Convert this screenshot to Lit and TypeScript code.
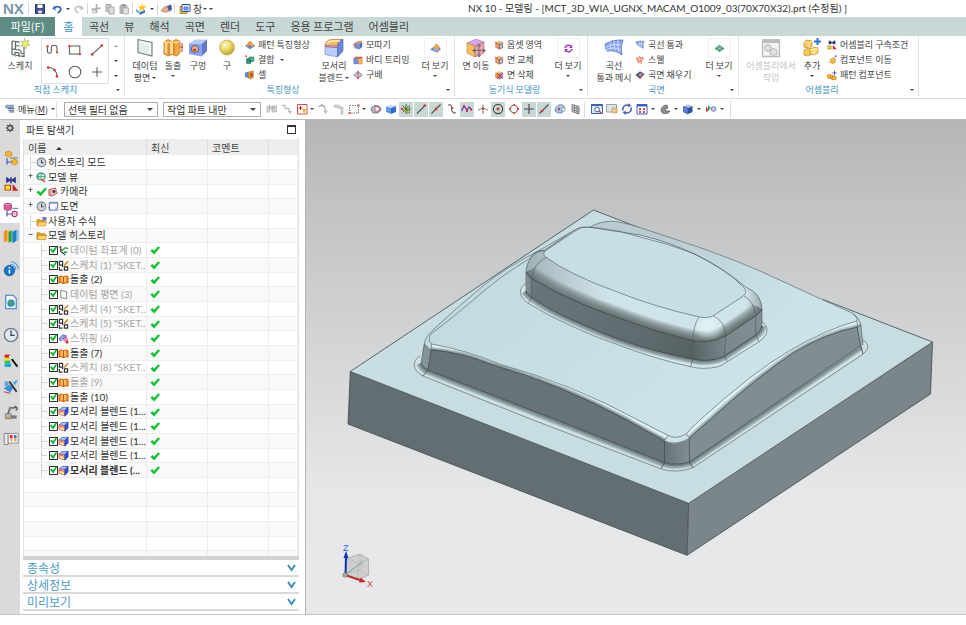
import { LitElement, html, css, svg, nothing, TemplateResult, SVGTemplateResult } from "lit";
import { customElement } from "lit/decorators.js";
import { classMap } from "lit/directives/class-map.js";

/* ---------- icon artwork: 12-unit grid for small glyphs, 20-unit grid for large ones ---------- */

const pad = (x: number, y: number, fill = "#f7b733", edge = "#a8650c") => svg`
  <path d="M${x} ${y + 1.5}l2.5-1.3 2.5 1v2.8l-2.5 1.3-2.5-1z" fill=${fill} stroke=${edge} stroke-width=".6"/>`;

const small: Record<string, SVGTemplateResult> = {
  save: svg`<path d="M1.5 1.5h9v9h-9z" fill="#3f4f8f" stroke="#27356e"/><path d="M3.5 1.5h5v3.5h-5z" fill="#fff"/><path d="M4 7.5h4v3H4z" fill="#cfd6ea"/>`,
  undo: svg`<path d="M4 2.5L1.2 5.4 4.6 7.6z" fill="#3566c8"/><path d="M3 5.2C6 2.5 10.5 3.5 9.6 7c-.4 1.5-1.6 2.4-3 3" fill="none" stroke="#3566c8" stroke-width="1.8"/>`,
  redo: svg`<path d="M8 2.5l2.8 2.9-3.4 2.2z" fill="#b9bfc8"/><path d="M9 5.2C6 2.5 1.5 3.5 2.4 7c.4 1.5 1.6 2.4 3 3" fill="none" stroke="#b9bfc8" stroke-width="1.6"/>`,
  cut: svg`<path d="M6.500 1v9M1.500 6.500l9-1.500" stroke="#a9a9a9" stroke-width="1.500"/><circle cx="4" cy="8.500" r="1.600" fill="none" stroke="#b5b5b5"/>`,
  copy: svg`<path d="M2 1.500h5v7H2z" fill="#c9c9c9" stroke="#a8a8a8"/><path d="M5 4h5v7H5z" fill="#dcdcdc" stroke="#a8a8a8"/>`,
  paste: svg`<rect x="1.500" y="2" width="8" height="9" rx="1" fill="#b4b4b4"/><path d="M5 5h5.500v6H5z" fill="#e0e0e0" stroke="#a0a0a0" stroke-width=".7"/><path d="M3.500 1h4v2h-4z" fill="#989898"/>`,
  star: svg`<path d="M7 0l1 3 4 .3-3 2 1 3.500-3-2-3 2L5 5.300 2.500 3.500l3.500-.3z" fill="#ffc825"/><path d="M1 5.500l4 3.500v2.500L1 9z" fill="#7fb2ec"/><path d="M5 9l5-2v2.500l-5 2.500z" fill="#3b78c8"/>`,
  hand: svg`<path d="M1 7.500l4-4 3 .5 3-1.500v5L7 9H4z" fill="#e7b085" stroke="#a2603c" stroke-width=".6"/><path d="M7 3l4-1.500 1 5-3 1.500z" fill="#3e5ca8"/>`,
  windows: svg`<path d="M1 3.500h7v7H1z" fill="#f5c13c" stroke="#8d6d18" stroke-width=".7"/><path d="M3 1.500h8v7H3z" fill="#e8f0ff" stroke="#2d52b5"/><path d="M5 4h4v3H5z" fill="#7aa6f5" stroke="#2d52b5" stroke-width=".6"/>`,
  pattern: svg`<path d="M0 7l3-2 4 2 4-2 1 2-6 4z" fill="#4e86e0"/><path d="M3 4l3-2.500L9 4 6 6z" fill="#f19a3e" stroke="#b0641a" stroke-width=".5"/><path d="M1 7l2.500-1.500L6 7 3.500 8.500zM6.500 7L9 5.500 11.500 7 9 8.500z" fill="#f3a24c" stroke="#b0641a" stroke-width=".5"/>`,
  unite: svg`<circle cx="1.500" cy="1.500" r="1.100" fill="#e23c2e"/><path d="M2 4.500h5V10H2z" fill="#2f9d77" stroke="#0d5c41" stroke-width=".8"/><path d="M5 2.500h5.500v5H5z" fill="#53b795" stroke="#0d5c41" stroke-width=".8"/><path d="M5.500 4.800h2v2.500h-2z" fill="#1e7d5d"/>`,
  shell: svg`<path d="M0 3l5-1v8L0 8.500z" fill="#5f86d6"/><path d="M4 2.500l6-1.500v8l-3 2-3-1.500z" fill="#f29a44" stroke="#b3641c" stroke-width=".6"/><path d="M6.500 3.500L9 3v4.500L6.500 9z" fill="#a44f16"/>`,
  chamfer: svg`<path d="M2 4l4-2.500h5L8 4z" fill="#f5a04a" stroke="#b5651d" stroke-width=".5"/><path d="M2 4l6 .5V11L2 9.500z" fill="#7da0ee" stroke="#3c55a8" stroke-width=".5"/><path d="M8 4.500l3-2.500v6L8 11z" fill="#4d6bc6"/><path d="M0 5l7 4" stroke="#d4352b" stroke-width="1.100"/>`,
  trim: svg`<path d="M1 4h6v6.500H1z" fill="#6f93e8" stroke="#3c55a8" stroke-width=".6"/><path d="M6 4h5v6.500H6z" fill="#f6b36c" stroke="#c26b1d" stroke-width=".6"/><path d="M1 4l2-2h8.500l-.5 2z" fill="#dd5b3d"/>`,
  draft: svg`<path d="M6 1.500L11 6 6 10.500 1 6z" fill="#bccdf8" stroke="#4464c0" stroke-width=".8"/><path d="M6 1v10" stroke="#d03a2c" stroke-width="1.200"/><path d="M1 7h10" stroke="#f0a050" stroke-width="1.200"/>`,
  faceA: svg`<path d="M2 3.500L6.500 1.500l4 1.500L6.500 5z" fill="#f6c665" stroke="#a57926" stroke-width=".5"/><path d="M2 3.500l4.500 1.500v6L2 9z" fill="#f09a5c" stroke="#a24f22" stroke-width=".5"/><path d="M6.500 5l4-2v6l-4 2z" fill="#d0a4e2" stroke="#774090" stroke-width=".5"/><path d="M6.500 6H10v3.500H6.500z" fill="#eee" stroke="#505050" stroke-width=".8"/><path d="M1 2l3 3" stroke="#d43b3b"/>`,
  faceDel: svg`<path d="M2 3.500L6.500 1.500l4 1.500L6.500 5z" fill="#f6c665"/><path d="M2 3.500l4.500 1.500v6L2 9z" fill="#f0974f" stroke="#a24f22" stroke-width=".5"/><path d="M6.500 5l4-2v6l-4 2z" fill="#c690dc" stroke="#774090" stroke-width=".5"/><path d="M4 4l6 6M10 4l-6 6" stroke="#b8293a" stroke-width="1.200"/>`,
  through: svg`<path d="M1 2.500Q6 .5 11 1.500Q9 6 10 10Q6 8 3 6z" fill="#8ea8ee" stroke="#4a62b8" stroke-width=".6"/><path d="M3 6Q6 4 10.500 4.500M5 2Q5 5 6 8M8 1.500Q7 5 8 9" stroke="#eef2ff" stroke-width=".6" fill="none"/>`,
  swell: svg`<path d="M1 3l3-1.500L6 3l3-1 2 2-2 3-2 4-3-1-1-3-2-1z" fill="#f8cdb8"/><path d="M2 4l2 2M5 2l2 2M8 3l2 2M3 7l2 2M6 6l2 2M7 9l1 1" stroke="#d46a50" stroke-width="1.300"/>`,
  fillSurf: svg`<path d="M1 6l5-4 5 3-5 5z" fill="#3553a8" stroke="#22356e" stroke-width=".6"/><path d="M4 5.500l3-1.500 2 1.500-3 2.500z" fill="#f3a03c"/><path d="M4 9l4 1" stroke="#d43b3b"/>`,
  constrain: svg`<path d="M2 1h2l2 2 2-2h2v4H8L6 4 4 5H2z" fill="#35357f"/><path d="M1 7h4v4H1z" fill="#f5d327" stroke="#8c7a10" stroke-width=".6"/><path d="M7 6l5 5H7z" fill="#d42e2e"/>`,
  moveComp: svg`<path d="M4 5l3-1.500L10 5v4L7 10.500 4 9z" fill="#f4b93c" stroke="#a8740f" stroke-width=".5"/><path d="M8 3.500l3-2.500M9.500 1H11v1.500" stroke="#3b66c9" fill="none" stroke-width=".9"/><path d="M1 10l2-2" stroke="#c0c0c0"/>`,
  patComp: svg`${pad(0, 5)}${pad(4, 6)}<path d="M9 1v5M6.500 3.500h5" stroke="#3b66c9" stroke-width="1.200"/>${pad(6, 7)}`,
  menu: svg`<path d="M1 1.500h9v3H1z" fill="#9fb2cf" stroke="#4d6387" stroke-width=".7"/><path d="M3 5.500h8M4 7.500h7M5 9.500h6" stroke="#4d6387" stroke-width="1.200"/>`,
  grayPick: svg`<path d="M1 4l3-2v6L1 9.500zM6 3h4.500v6H6z" fill="#d5d5d5" stroke="#aaa" stroke-width=".7"/><path d="M3 5h6" stroke="#999"/>`,
  grayFlow: svg`<path d="M1 2.500h3v3h4v3" fill="none" stroke="#bdbdbd" stroke-width="1.300"/><path d="M7 8h4l-2 3z" fill="#b4b4b4"/>`,
  filterAdd: svg`<path d="M1.500 1.500h9.500v9.500H1.500z" fill="#fff" stroke="#e04848"/><path d="M4.500 3v4M2.500 5h4" stroke="#a03030" stroke-width="1.100"/><path d="M6 6h4.500L9 8.500v2H8z" fill="#f0b52e"/>`,
  arrowBack: svg`<path d="M1.500 4l3.500-2.500v1.500h2l1.500 4" fill="none" stroke="#b0b0b0" stroke-width="1.300"/><path d="M6 7.500h5L8.500 11z" fill="#bcbcbc"/>`,
  grayCut: svg`<path d="M1 2h5l2 2 2 .5V11H8V6L5 5 1 4z" fill="#cfcfcf" stroke="#aaa" stroke-width=".5"/>`,
  dashRect: svg`<path d="M1.500 2.500h9v7.500h-9z" fill="none" stroke="#666" stroke-width=".9" stroke-dasharray="1.500 1"/><path d="M9.500 1.500h2v2h-2zM.5 9h2v2h-2z" fill="#e04848"/>`,
  dome: svg`<path d="M1 7c0-6 10-6 10 0L8 10H3z" fill="#aeb9cc" stroke="#5c6a86" stroke-width=".8"/><path d="M5 4h4v4H5z" fill="#fff" stroke="#c44" stroke-width=".7"/>`,
  cube: svg`<path d="M1 3.500L6 1.500l5 1.500-5 2z" fill="#bfe0ff"/><path d="M1 3.500L6 5v6L1 9z" fill="#5d9bf0"/><path d="M6 5l5-2v6l-5 2z" fill="#2f6bd0"/>`,
  snap: svg`<path d="M6 1v10M1 6h10M2.500 2.500l7 7M9.500 2.500l-7 7" stroke="#2e4b38" stroke-width=".8"/><path d="M3 5h2.500v2.500H3zM7 3.500h2.500V6H7zM7 7.500h2.500V10H7z" fill="#e8d23c" stroke="#474" stroke-width=".6"/><circle cx="1.800" cy="6" r="1.200" fill="#d43"/>`,
  endPt: svg`<path d="M2 10.500L10 2.500" stroke="#555" stroke-width="1.200"/><circle cx="9.800" cy="2.600" r="1.300" fill="#d9362b"/>`,
  midPt: svg`<path d="M1.500 10.500l9-9" stroke="#555" stroke-width="1.200"/><circle cx="6" cy="6" r="1.400" fill="#d9362b"/>`,
  ctrlPt: svg`<path d="M2 2c5-1 3 3 4 6 .5 1.500 2 2 4 2" fill="none" stroke="#666" stroke-width="1.100"/><path d="M5.500 4h1.800v1.800H5.500z" fill="#d9362b"/>`,
  curvePt: svg`<path d="M.5 8L3 3l3 4 2-3 3 3" fill="none" stroke="#7336b8" stroke-width="1.300"/><path d="M2 2h2v2H2zM5 7h2v2H5zM9 5.500h2v2H9z" fill="#d9362b"/>`,
  cross: svg`<path d="M6 1.500V11M1 7.500c2-2.500 8-2.500 10 0" fill="none" stroke="#777" stroke-width="1"/><circle cx="6" cy="5.500" r="1.300" fill="#d9362b"/>`,
  arcCtr: svg`<circle cx="6" cy="6" r="4.600" fill="none" stroke="#454545" stroke-width="1.100"/><circle cx="6" cy="6" r="1.400" fill="#d9362b"/>`,
  quad: svg`<circle cx="6" cy="6" r="3.800" fill="none" stroke="#666" stroke-width="1"/><path d="M5 1h2v2H5zM5 9h2v2H5zM1 5h2v2H1zM9 5h2v2H9z" fill="#e0503f"/>`,
  plus: svg`<path d="M6 1v10M1 6h10" stroke="#4a4a4a" stroke-width="1.200"/>`,
  onCurve: svg`<path d="M1.500 10.500l9-9" stroke="#555" stroke-width="1.200"/><circle cx="4" cy="8" r="1.300" fill="#d9362b"/>`,
  onFace: svg`<path d="M1 8c0-6 5-7 8-6l2 3-3 5H4z" fill="#a6c2ea" stroke="#4f74ab" stroke-width=".7"/><path d="M8 5h3v3H8z" fill="#fff" stroke="#777" stroke-width=".6"/><circle cx="5" cy="6" r="1.200" fill="#d9362b"/>`,
  mesh: svg`<path d="M2 1.500l7 2v7.500l-7-2.500z" fill="#d9d9d9" stroke="#666" stroke-width=".8"/><path d="M2 4l7 2M2 6.500l7 2M4.500 2v7.500M7 3v7.500" stroke="#666" stroke-width=".7"/>`,
  fit: svg`<path d="M.5 1.500h11v9H.5z" fill="#dce8fb" stroke="#3e63ae"/><path d="M.5 1h11v2H.5z" fill="#3e63ae"/><circle cx="6" cy="6.500" r="2.300" fill="#fff" stroke="#3e63ae"/><path d="M8 8l2.500 2.500" stroke="#d9362b" stroke-width="1.200"/>`,
  zoomIn: svg`<path d="M.5 1.500h10v7.500H.5z" fill="#dfe4ea" stroke="#9aa5b3"/><path d="M6 5h5v5H6z" fill="#f5c889" stroke="#c08a3c" stroke-width=".6"/>`,
  rotate: svg`<path d="M2 7.500A4.200 4.200 0 0 1 8 2.500M10 4.500A4.200 4.200 0 0 1 4 9.500" fill="none" stroke="#4b5fa6" stroke-width="1.500"/><path d="M7.500 0l3 3-3.500 1zM4.500 12l-3-3L5 8z" fill="#4b5fa6"/>`,
  grid4: svg`<path d="M1 1.500h10v9.500H1z" fill="#fff" stroke="#3e5fc4"/><path d="M1 1h10v2.500H1z" fill="#3e5fc4"/><path d="M3 5h2v2H3zM7 5h2v2H7zM3 8h2v2H3zM7 8h2v2H7z" fill="#e04848"/>`,
  shade: svg`<path d="M2 8c0-5 4-6 6-6l1 3-3 1 1 2 4 0c-1 3-8 4-9 0z" fill="#8d8d8d" stroke="#5c5c5c" stroke-width=".7"/>`,
  cube2: svg`<path d="M1.500 3.500L6 1.500l4.500 1.500L6 5z" fill="#a9bff5"/><path d="M1.500 3.500L6 5v6L1.500 9z" fill="#5d7fde" stroke="#2c4599" stroke-width=".6"/><path d="M6 5l4.500-2v6L6 11z" fill="#34509f"/>`,
  edges: svg`<path d="M1 3v6l2.500-1.500z" fill="#d9362b"/><path d="M3 2v6l3-3z" fill="#3aa655"/><circle cx="8.500" cy="6" r="2.300" fill="#c8cff0" stroke="#5966a8" stroke-width=".8"/>`,
  /* part navigator glyphs */
  clock: svg`<circle cx="6" cy="6" r="4.800" fill="#cfd5dc" stroke="#7c858f" stroke-width="1.200"/><path d="M6 3v3.200h2.500" stroke="#3c4650" fill="none" stroke-width="1.100"/>`,
  views: svg`<ellipse cx="5.500" cy="5" rx="4.500" ry="3.800" fill="#dff3e8" stroke="#219a66" stroke-width="1.200"/><path d="M3 3.500v4M5.500 2v6.500M1 5h9" stroke="#219a66" stroke-width=".8"/><path d="M6 8l4 3" stroke="#d9362b" stroke-width="1.300"/>`,
  camera: svg`<path d="M1 4l7-2 2 6-6 3-3-1z" fill="#e9a3a0" stroke="#a63a35" stroke-width=".8"/><circle cx="6.500" cy="6" r="2.300" fill="#4b4250" stroke="#fff" stroke-width=".7"/>`,
  tick: svg`<path d="M.5 6.800L2.800 4.800 4.900 7 10 1.500l2 1.800L5 11.300z" fill="#14c338"/>`,
  sheet: svg`<path d="M1.500 1.500h9v8.500h-9z" fill="#fff" stroke="#5065a6"/><path d="M1 1h10v2H1z" fill="#7e91cc"/><path d="M8 7h3v4H8z" fill="#9fafe0"/><path d="M.5 7l2 3" stroke="#5065a6"/>`,
  folder: svg`<path d="M1 3h3.500l1 1H10v6H1z" fill="#e7a61a" stroke="#99690a" stroke-width=".6"/><path d="M3 6h9l-2 4.500H1z" fill="#ffd768" stroke="#b07d10" stroke-width=".6"/>`,
  formula: svg`<path d="M1 4h3.500l1 1H10v5H1z" fill="#e7a61a" stroke="#99690a" stroke-width=".6"/><path d="M3 6.500h9l-2 4.500H1z" fill="#ffd768" stroke="#b07d10" stroke-width=".6"/><path d="M7 1h4.500v4H7z" fill="#7e74c8"/>`,
  csys: svg`<path d="M3 1v6l5 4" fill="none" stroke="#333" stroke-width="1.200"/><path d="M3 7l5-4 3 1" stroke="#1f9c48" stroke-width="1.300" fill="none"/><path d="M1 2l4 4" stroke="#c4312a"/><path d="M6 7h4v2H6z" fill="#2a9d5c"/>`,
  sketch: svg`<path d="M1.500 1.500h3.500v4H1.500zM1.500 7.500v3.500h3.500M7 7.500h3.500V11H7zM5 5.500v2" fill="none" stroke="#353535" stroke-width="1.300"/><path d="M6.500 6l4.500-4.500" stroke="#d38a21" stroke-width="1.700"/>`,
  extrude: svg`<path d="M1 3l2-1 3 1 3-1 2 1v7l-2-.5-3 1-3-1-2 .5z" fill="#f7901e" stroke="#c4500c" stroke-width=".9"/><path d="M4.300 3v6M7.600 3v6" stroke="#ffe0a0" stroke-width="1.200"/><path d="M6 3v7" stroke="#b4440c" stroke-width=".8"/>`,
  plane: svg`<path d="M3 1.500l6.500 1.500v7.500L3 9.500z" fill="#fbfdfb" stroke="#6b776b" stroke-width=".9"/>`,
  sweep: svg`<path d="M1 6l4-4 4 1v3L5 6 3 9z" fill="#9aa5ec" stroke="#4d57b5" stroke-width=".8"/><path d="M7 4l4 3-2 3-3-2z" fill="#e59ac0" stroke="#b3307b" stroke-width=".7"/><circle cx="10" cy="10" r="1.500" fill="#e03030"/>`,
  blend: svg`<path d="M1 4.500L4.500 1.500H11L7.500 5z" fill="#9ec1ff" stroke="#2a3fae" stroke-width=".7"/><path d="M1 4.500L7.500 5v6L1 9z" fill="#f8e4b0" stroke="#d3503b" stroke-width=".8"/><path d="M7.500 5L11 1.500v6L7.500 11z" fill="#2e52dd" stroke="#1e2f9c" stroke-width=".7"/><path d="M1.500 6.500Q5 5 7 7.500" stroke="#d43" fill="none"/>`,
  gear: svg`<circle cx="6" cy="6" r="2.800" fill="none" stroke="#3e3e3e" stroke-width="1.400"/><path d="M6 1v2M6 9v2M1 6h2M9 6h2M2.500 2.500l1.300 1.300M8.200 8.200l1.300 1.300M9.500 2.500L8.200 3.800M3.800 8.200L2.500 9.500" stroke="#3e3e3e" stroke-width="1.300"/>`,
  more1: svg`<path d="M0 7l3-2 6 0 3 1.500-4 4z" fill="#5b8cdd"/><path d="M4 4.500L7 1l3 3v3.500L7 9 4 7.500z" fill="#f2a44f" stroke="#b3641c" stroke-width=".6"/><ellipse cx="6.500" cy="8" rx="3.500" ry="1.500" fill="#84a9ef"/>`,
  more2: svg`<path d="M2 5.500C3 2 7 1.500 9 4M10 6.500C9 10 5 10.500 3 8" fill="none" stroke="#9b38ba" stroke-width="1.500"/><path d="M10 1.500v4H6.500zM2 10.500v-4h3.500z" fill="#9b38ba"/>`,
  more3: svg`<path d="M1 6l5-3.500L11 6 6 9.500z" fill="#4fa579" stroke="#2d7a53" stroke-width=".6"/><path d="M3.500 4.200l5 3.500M8.500 4.200l-5 3.500" stroke="#b9e2cc" stroke-width=".6"/>`,
};

const large: Record<string, SVGTemplateResult> = {
  sketch: svg`<path d="M2 3v13.500l12 2V9M2 3l8 1M5.500 3.500v8l5 .7M2 10.800l3.500.5M5 18.500v-4l4 .5v4M5.500 7.500l4 .5M11 12.500v3M11 15.500l3 .4" fill="none" stroke="#5c6663" stroke-width="1.200"/><path d="M14.500 0l1 3.500L19 2l-1.500 3.500 2.500 1.500-3.500.8L16 11l-2-3-3.500.5L13 6l-2-3 3 1z" fill="#ffe86a" stroke="#8fc67a" stroke-width=".7"/>`,
  datum: svg`<path d="M3 1.500l14 3V18L3 14.500z" fill="#e5efe9" stroke="#7b8780" stroke-width="1.200"/><path d="M5 4l10 2v9.500" fill="none" stroke="#fff"/>`,
  extrude: svg`<path d="M1 4l4-2.500 4 2 4-2L17 3v12l-3 3-5-1.500-4 1.500-4-2z" fill="#f4a545" stroke="#c07a28" stroke-width=".8"/><path d="M1 4l5 1 3-1.500L13 5l4-2" fill="none" stroke="#fff0c4"/><path d="M6 5v12M11 5v11.500" stroke="#b9691f" stroke-width=".8"/><path d="M7 5v11h3V4.500zM2 5v10h2V5.500z" fill="#ffd98c"/><path d="M19 5v9M17 9h3" stroke="#d9362b"/>`,
  hole: svg`<path d="M1 5.500L7 1.500h12L13.500 6z" fill="#b6c8fb"/><path d="M1 5.500L13.500 6v12.500L1 16z" fill="#86a3f2"/><path d="M13.500 6L19 1.500V13l-5.500 5.500z" fill="#5f78cd"/><ellipse cx="7" cy="11" rx="3.800" ry="3.600" fill="#f3a968" stroke="#5064b0"/><ellipse cx="6.500" cy="12" rx="1.800" ry="1.600" fill="#ca4a1d"/>`,
  sphere: svg`<defs><radialGradient id="ball" cx=".38" cy=".32" r=".7"><stop offset="0" stop-color="#fff9c9"/><stop offset=".6" stop-color="#e2cf56"/><stop offset="1" stop-color="#b7a136"/></radialGradient></defs><circle cx="10" cy="9.500" r="7.500" fill="url(#ball)" stroke="#b3a04a" stroke-width=".6"/>`,
  blend: svg`<path d="M1 7C2 3 4 2 8 1.500h11C15 2 14 4 13.500 8z" fill="#ffb85e" stroke="#c6753f" stroke-width=".7"/><path d="M1 7l12.500 1v11L1 16.500z" fill="#b9cdfb" stroke="#6b80c4" stroke-width=".6"/><path d="M13.500 8C14 4 15 2.500 19 1.500V13l-5.500 6z" fill="#6c86d8" stroke="#4b61ac" stroke-width=".6"/><path d="M3 6C4 4 6 3 9 3h7" stroke="#fff3b0" fill="none" stroke-width="1.300"/><path d="M1 8.500l12 1" stroke="#d64a3e"/>`,
  moveFace: svg`<path d="M1 5l9-4 8 3-9 4z" fill="#d9a6e8" stroke="#a970b8" stroke-width=".6"/><path d="M1 5l8 3v11l-8-4z" fill="#f5c060" stroke="#b4832b" stroke-width=".6"/><path d="M9 8l9-4v11l-9 4z" fill="#f0a0a8" stroke="#a06470" stroke-width=".6"/><path d="M13 6.500v12M7 12.500h12M13 6l-1.500 2h3zM13 19l-1.500-2h3zM6.500 12.500l2-1.500v3zM19.500 12.500l-2-1.500v3z" fill="#fff" stroke="#666" stroke-width=".9"/>`,
  meshSurf: svg`<path d="M1 6Q9 1 19 2Q16 9 18 17Q12 12 3 13Q1 10 1 6z" fill="#8aa5ee" stroke="#5a72c4" stroke-width=".8"/><path d="M1.500 9.500Q9 5 17 7M2 12Q9 8 17 12M6 4Q6 8 7 12M10 2.500Q10 8 11 12.500M14 2Q13 8 15 14" fill="none" stroke="#e2e9ff" stroke-width=".8"/>`,
  asmWork: svg`<path d="M1.500 2h17v16.500h-17z" fill="#f3f3f3" stroke="#b9b9b9" stroke-width="1.300"/><path d="M1 1.500h18V5H1z" fill="#bdbdbd"/><path d="M4 8l3-1.500L10 8v4l-3 1.500L4 12zM9 12l3.500-1.500L16 12v4l-3.500 1.500L9 16z" fill="#e0e0e0" stroke="#b0b0b0" stroke-width=".9"/>`,
  add: svg`<path d="M2 4l3-2 5 1v5L7 10 2 9z" fill="#f6ca5a" stroke="#b28a20" stroke-width=".7"/><path d="M2 12l4-2 4 1v5l-4 2-4-1z" fill="#f6ca5a" stroke="#b28a20" stroke-width=".7"/><path d="M8 11l4-2 4 1v5l-4 2-4-1z" fill="#f9d878" stroke="#b28a20" stroke-width=".7"/><path d="M2 4l5 1v5M7 5l3-2M8 11l4 1v5M12 12l4-2" fill="none" stroke="#fff3c4" stroke-width=".8"/><path d="M15.500 0v7M12 3.500h7" stroke="#2d6fe8" stroke-width="2"/>`,
  spline: svg`<path d="M3 5v6c0 4 5 4 5 0V7c0-4 7-4 7 0v5" fill="none" stroke="#5a5a5a" stroke-width="1.300"/><path d="M2 4h2.500v2.500H2zM13.800 11.500h2.500V14h-2.500z" fill="#d9362b"/>`,
  rect: svg`<path d="M3 5h13v10H3z" fill="none" stroke="#5a5a5a" stroke-width="1.300"/><path d="M1.800 3.800h2.500v2.500H1.800zM14.800 13.800h2.500v2.500h-2.500z" fill="#d9362b"/>`,
  line: svg`<path d="M4 15.500L16 4.500" stroke="#5a5a5a" stroke-width="1.300"/><circle cx="4" cy="15.500" r="1.600" fill="#d9362b"/><circle cx="16" cy="4.500" r="1.600" fill="#d9362b"/>`,
  arc: svg`<path d="M4 4.500c6-.5 10.500 4 11 11" fill="none" stroke="#5a5a5a" stroke-width="1.300"/><circle cx="4" cy="4.500" r="1.600" fill="#d9362b"/><circle cx="12" cy="7.500" r="1.600" fill="#d9362b"/><circle cx="15" cy="15.500" r="1.600" fill="#d9362b"/>`,
  circle: svg`<circle cx="10" cy="10" r="7.300" fill="none" stroke="#5a5a5a" stroke-width="1.300"/>`,
  plus: svg`<path d="M10 4v12M4 10h12" stroke="#5a5a5a" stroke-width="1.300"/>`,
  /* resource bar */
  asmNav: svg`<path d="M3 3l4-1.500L11 3v4L7 8.500 3 7z" fill="#fbb829" stroke="#b27807" stroke-width=".8"/><path d="M9 10h9" stroke="#888" stroke-width="1.600"/><path d="M5 10v8M5 15h6" stroke="#4050c0" stroke-width="1.400"/><path d="M11 13l3.500-1.500L18 13v4l-3.500 1.500L11 17z" fill="#fbb829" stroke="#b27807" stroke-width=".8"/>`,
  conNav: svg`<path d="M4 1l5 3.500V1.500h2v3L16 1v8l-5-3v3H9V6L4 9z" fill="#27348e"/><path d="M2.500 11.500h7v6h-7z" fill="#fff325" stroke="#c4321c" stroke-width="1.300"/><path d="M12 10l7 8.500h-7z" fill="#c92020"/>`,
  partNav: svg`<ellipse cx="6" cy="3.500" rx="4.500" ry="1.800" fill="#f1a3cd" stroke="#a02870"/><path d="M1.500 3.500v5c0 2.400 9 2.400 9 0v-5" fill="#d95a9d" stroke="#a02870"/><path d="M12 8h7" stroke="#888" stroke-width="1.500"/><path d="M5 11v7M5 15h6" stroke="#4050c0" stroke-width="1.400"/><circle cx="14.500" cy="15" r="3.200" fill="#fff" stroke="#b3307b" stroke-width="1.500"/><circle cx="14.500" cy="15" r="1" fill="#b3307b"/>`,
  library: svg`<path d="M1 4l4-2v14l-4 2z" fill="#ef9020"/><path d="M5 4l3-2v14l-3 2z" fill="#f7b64c"/><path d="M7 5l4-2.500v14L7 18.500z" fill="#25a04d"/><path d="M11 5l2-2.500v14l-2 2z" fill="#67cd80"/><path d="M12 5l5-3v14l-5 3z" fill="#1c7fce"/><path d="M17 2l2.500 1v12L17 16z" fill="#80c0f0"/>`,
  info: svg`<circle cx="8" cy="12" r="6.500" fill="#1974d2" stroke="#0c54a3"/><path d="M8 11v4.500M8 7.500v2" stroke="#fff" stroke-width="2"/><path d="M9 4c4 0 7 3 7 7M10 1c5 0 9 4 9 9" fill="none" stroke="#4b93dd" stroke-width="1.300"/>`,
  web: svg`<path d="M3.500 1.500h9l4 4v13h-13z" fill="#f2f8ff" stroke="#3b79c0" stroke-width="1.300"/><circle cx="10" cy="11.500" r="4.500" fill="#2f86d6"/><path d="M8 8l4 1-1 3 2 2-3 2-1-4-3-1z" fill="#43b348"/>`,
  history: svg`<circle cx="10" cy="10" r="8.300" fill="#dfe7ef" stroke="#6f7a86" stroke-width="1.700"/><path d="M10 4v6.500h4.500" stroke="#2d3a48" fill="none" stroke-width="1.500"/>`,
  palette: svg`<path d="M2 2h7v4H2z" fill="#e52020"/><path d="M2 6h6v3.500H2z" fill="#f8e21c"/><path d="M2 9.500h7V13H2z" fill="#27c93c"/><path d="M2 13h8v4.500H2z" fill="#1aa6e8"/><path d="M9 5l9 12" stroke="#111" stroke-width="2.400"/><path d="M8 3.500l3 4" stroke="#fff" stroke-width="2.400"/>`,
  process: svg`<path d="M1 12l7-5 5 4-4 6z" fill="#3a8fd8"/><path d="M2 3h5v6H2z" fill="#5aa4e4"/><path d="M12 4l7-3-4 7z" fill="#57a7dc"/><path d="M8 3l9 13" stroke="#2b2b2b" stroke-width="2.200"/><path d="M1 16l8 2" stroke="#c05070" stroke-width="1.400"/>`,
  robot: svg`<path d="M3 11h7v6H3z" fill="#b9bfc5" stroke="#555" stroke-width=".8"/><path d="M6 11L9 4l7-1" fill="none" stroke="#666" stroke-width="2.200"/><circle cx="9" cy="4" r="2" fill="#888"/><path d="M15 1l3 3-2 3" fill="none" stroke="#444" stroke-width="1.300"/><path d="M10 13h7v4h-7z" fill="#7a7a7a"/><circle cx="6" cy="15" r="1.600" fill="#e0a030"/>`,
  roles: svg`<path d="M1.500 3h5v14h-5z" fill="#ececec" stroke="#777" stroke-width="1.100"/><path d="M6.500 3H19v12H6.500z" fill="#fff" stroke="#888" stroke-width="1.100"/><path d="M8.500 5h3.500v4H8.500z" fill="#e03020"/><path d="M13.500 5H17v4h-3.500z" fill="#3f7fe0"/><path d="M9 9h3v4H9z" fill="#f49a8c"/><path d="M14 9h3v4h-3z" fill="#f0a03c"/>`,
};

const ico = (name: string, px: 10 | 11 | 12 = 11) => html`
  <svg class="s${px}" viewBox="0 0 12 12" aria-hidden="true">${small[name]}</svg>`;
const big = (name: string, cls = "l20") => html`
  <svg class=${cls} viewBox="0 0 20 20" aria-hidden="true">${large[name]}</svg>`;

const caret = html`<span class="caret"></span>`;

const shared = css`
  * { box-sizing: border-box; }
  svg { display: block; flex: none; }
  button {
    font: inherit; color: inherit; background: none; border: 0; padding: 0; margin: 0;
    display: flex; align-items: center; justify-content: center; white-space: nowrap;
  }
  .s10 { width: 10px; height: 10px; }
  .s11 { width: 11px; height: 11px; }
  .s12 { width: 12px; height: 12px; }
  .l16 { width: 16px; height: 16px; }
  .l20 { width: 20px; height: 20px; }
  .caret {
    flex: none; width: 0; height: 0;
    border: 2px solid transparent; border-top: 2px solid #444; border-bottom: 0;
  }
`;

/* ---------- title bar and tabs ---------- */

@customElement("nx-title-bar")
export class NxTitleBar extends LitElement {
  static styles = [shared, css`
    :host { display: flex; align-items: center; height: 17px; background: #fff; font-size: 10px; line-height: 15px; }
    .quick { display: flex; align-items: center; flex: 0 0 468px; height: 15px; color: #444; }
    .logo { font: bold 15px/15px "Liberation Sans", sans-serif; color: #7797a8; width: 27px; padding-left: 3px; }
    .sep { width: 1px; height: 11px; background: #d5d5d5; margin: 0 1px; }
    .q { width: 14px; height: 15px; }
    .save { margin: 0 3px; }
    .menu { width: 8px; height: 15px; }
    .window { gap: 2px; margin-left: 3px; }
    .window + .menu, .menu + .menu { width: 6px; }
    h1 { margin: 0; font: 400 10px/15px Lato, "Noto Sans CJK KR", sans-serif; color: #333; white-space: nowrap; }
  `];
  private q = (name: string, label: string, cls = "") =>
    html`<button class="q ${cls}" aria-label=${label}>${ico(name, 12)}</button>`;
  private drop = html`<button class="menu" aria-label="옵션">${caret}</button>`;
  render() {
    return html`
      <div class="quick">
        <span class="logo">NX</span><span class="sep"></span>
        ${this.q("save", "저장", "save")}${this.q("undo", "실행 취소")}${this.drop}
        ${this.q("redo", "다시 실행")}<span class="sep"></span>
        ${this.q("cut", "잘라내기")}${this.q("copy", "복사")}${this.q("paste", "붙여넣기")}<span class="sep"></span>
        ${this.q("star", "명령 반복")}${this.drop}<span class="sep"></span>
        ${this.q("hand", "터치 모드")}<span class="sep"></span>
        <button class="window">${ico("windows", 12)}창</button>${this.drop}${this.drop}
      </div>
      <h1>NX 10 - 모델링 - [MCT_3D_WIA_UGNX_MACAM_O1009_03(70X70X32).prt (수정됨) ]</h1>
    `;
  }
}

@customElement("nx-tabs")
export class NxTabs extends LitElement {
  static styles = [shared, css`
    :host { display: block; background: #c8d8d6; }
    nav { display: flex; height: 19px; font-size: 11px; line-height: 19px; color: #444; }
    .file { background: #5e8b84; color: #fff; width: 55px; }
    .home { background: #fff; color: #3795c8; width: 27px; }
    .tab { padding: 0 8px 0 7px; }
  `];
  render() {
    return html`<nav>
      <button class="file">파일(F)</button>
      <button class="home" aria-current="page">홈</button>
      ${["곡선", "뷰", "해석", "곡면", "렌더", "도구", "응용 프로그램", "어셈블리"].map(
        (t) => html`<button class="tab">${t}</button>`)}
    </nav>`;
  }
}

/* ---------- ribbon ---------- */

@customElement("nx-ribbon")
export class NxRibbon extends LitElement {
  static styles = [shared, css`
    :host { display: flex; height: 63px; background: #fff; border-bottom: 1px solid #dcdcdc; font-size: 9px; line-height: 12px; color: #444; }
    section { display: flex; flex-direction: column; padding-top: 2px; margin-bottom: 2px; border-right: 1px solid #e2e2e2; }
    .items { display: grid; height: 48px; }
    .g1 .items { grid-template-columns: 40px 70px 14px; }
    .g2 .items { grid-template-columns: 28px 28px 22px 36px 70px 38px 67px 30px; padding: 0 4px 0 6px; }
    .g3 .items { grid-template-columns: 36px 59px 30px; padding: 0 4px 0 3px; }
    .g4 .items { grid-template-columns: 42px 69px 30px; padding: 0 4px 0 5px; }
    .g5 .items { grid-template-columns: 52px 30px 91px; padding: 0 0 0 6px; }
    .big { flex-direction: column; justify-content: flex-start; gap: 2px; line-height: 12px; }
    .big .lbl { display: flex; flex-direction: column; align-items: center; }
    .row2 { display: flex; align-items: center; gap: 2px; height: 12px; }
    .below { height: 8px; }
    .off { color: #c6c6c6; }
    .frame { width: 23px; height: 20px; border: 1px solid #efefef; border-radius: 2px; display: flex; align-items: center; justify-content: center; }
    .list { display: grid; grid-auto-rows: 15px; align-content: start; margin-top: -1px; }
    .list button { justify-content: flex-start; gap: 3px; }
    .gallery { display: grid; grid-template-columns: repeat(3, 1fr); border: 1px solid #dfdfdf; margin: 0 1px; width: 68px; }
    .scroll { display: flex; flex-direction: column; justify-content: space-around; align-items: center; width: 12px; }
    .scroll button { width: 10px; height: 10px; }
    .scroll .up { border-top: 0; border-bottom: 2px solid #999; }
    footer { display: flex; align-items: center; height: 12px; color: #4596c2; }
    footer h2 { flex: 1; margin: 0; font-size: 9px; font-weight: 400; text-align: center; }
    footer button { width: 13px; height: 12px; }
  `];
  private large(icon: string, lines: string[], mode: "" | "inline" | "below" = "", off = false) {
    return html`<button class="big ${off ? "off" : ""}" ?disabled=${off}>
      ${big(icon)}
      <span class="lbl">
        <span>${lines[0]}</span>
        ${lines[1] ? html`<span class="row2">${lines[1]}${mode === "inline" ? caret : nothing}</span>` : nothing}
        ${mode === "below" ? html`<span class="row2 below">${caret}</span>` : nothing}
      </span>
    </button>`;
  }
  private more(icon: string) {
    return html`<button class="big"><span class="frame">${ico(icon, 11)}</span>
      <span class="lbl"><span>더 보기</span><span class="row2 below">${caret}</span></span></button>`;
  }
  private list(rows: [string, string, boolean?][]) {
    return html`<div class="list">${rows.map(([i, t, c]) => html`<button>${ico(i, 10)}${t}${c ? html`&nbsp;${caret}` : nothing}</button>`)}</div>`;
  }
  private group(cls: string, title: string, items: TemplateResult) {
    return html`<section class=${cls}>
      <div class="items">${items}</div>
      <footer><h2>${title}</h2><button aria-label="${title} 옵션">${caret}</button></footer>
    </section>`;
  }
  render() {
    return html`
      ${this.group("g1", "직접 스케치", html`
        ${this.large("sketch", ["스케치"])}
        <div class="gallery">
          ${[["spline", "프로파일"], ["rect", "직사각형"], ["line", "선"], ["arc", "원호"], ["circle", "원"], ["plus", "점"]].map(
            ([i, l]) => html`<button aria-label=${l}>${big(i, "l16")}</button>`)}
        </div>
        <div class="scroll">
          <button aria-label="위로"><span class="caret up"></span></button>
          <button aria-label="아래로">${caret}</button>
          <button aria-label="모두 보기">${caret}</button>
        </div>`)}
      ${this.group("g2", "특징형상", html`
        ${this.large("datum", ["데이텀", "평면"], "inline")}
        ${this.large("extrude", ["돌출"], "below")}
        ${this.large("hole", ["구멍"])}
        ${this.large("sphere", ["구"])}
        ${this.list([["pattern", "패턴 특징형상"], ["unite", "결합", true], ["shell", "셸"]])}
        ${this.large("blend", ["모서리", "블렌드"], "inline")}
        ${this.list([["chamfer", "모따기"], ["trim", "바디 트리밍"], ["draft", "구배"]])}
        ${this.more("more1")}`)}
      ${this.group("g3", "동기식 모델링", html`
        ${this.large("moveFace", ["면 이동"])}
        ${this.list([["faceA", "옵셋 영역"], ["faceA", "면 교체"], ["faceDel", "면 삭제"]])}
        ${this.more("more2")}`)}
      ${this.group("g4", "곡면", html`
        ${this.large("meshSurf", ["곡선", "통과 메시"])}
        ${this.list([["through", "곡선 통과"], ["swell", "스웰"], ["fillSurf", "곡면 채우기"]])}
        ${this.more("more3")}`)}
      ${this.group("g5", "어셈블리", html`
        ${this.large("asmWork", ["어셈블리에서", "작업"], "", true)}
        ${this.large("add", ["추가"], "below")}
        ${this.list([["constrain", "어셈블리 구속조건"], ["moveComp", "컴포넌트 이동"], ["patComp", "패턴 컴포넌트"]])}`)}
    `;
  }
}

/* ---------- selection bar ---------- */

type Tool = [icon: string, state?: "on" | "menu"];

@customElement("nx-selection-bar")
export class NxSelectionBar extends LitElement {
  static styles = [shared, css`
    :host { display: flex; align-items: center; height: 21px; background: #fff; border-bottom: 1px solid #b9b9b9; font-size: 10px; color: #333; }
    .menu { gap: 3px; padding-left: 4px; width: 56px; font-size: 9px; }
    .sep { width: 1px; height: 17px; background: #dedede; }
    .pick { display: grid; align-items: center; height: 15px; border: 1px solid #adadad; margin-left: 5px; }
    .filter { width: 94px; margin-left: 7px; }
    .scope { width: 98px; margin-right: 3px; }
    select {
      grid-area: 1 / 1; width: 100%; height: 13px; appearance: none; border: 0; background: none;
      padding: 0 0 0 3px; font: inherit; line-height: 13px; color: inherit;
    }
    .pick .caret { grid-area: 1 / 1; justify-self: end; margin-right: 4px; border-width: 3px 3px 0; pointer-events: none; }
    .set { display: flex; margin-right: 1px; }
    .tool { width: 15px; height: 15px; }
    .on { background: #c8d8d6; border-right: 1px solid #fff; }
    .drop { width: 6px; height: 15px; }
    .views { display: flex; margin: 0 4px; }
    .views .drop { width: 8px; }
  `];
  private tool([name, state]: Tool) {
    return html`<button class="tool ${state === "on" ? "on" : ""}" aria-label=${name}>${ico(name, 12)}</button>
      ${state === "menu" ? html`<button class="drop" aria-label="${name} 목록">${caret}</button>` : nothing}`;
  }
  render() {
    const sets: Tool[][] = [
      [["grayPick"], ["grayFlow"], ["filterAdd", "menu"], ["arrowBack"]],
      [["grayCut"], ["dashRect", "menu"]],
      [["dome"], ["cube"]],
      [["snap", "on"], ["endPt", "on"], ["midPt", "on"], ["ctrlPt"]],
      [["curvePt", "on"], ["cross"]],
      [["arcCtr", "on"], ["quad"]],
      [["plus", "on"], ["onCurve", "on"], ["onFace"]],
      [["mesh"]],
    ];
    const views: Tool[] = [["fit"], ["zoomIn"], ["rotate"], ["grid4", "menu"], ["shade", "menu"], ["cube2", "menu"], ["edges", "menu"]];
    return html`
      <button class="menu">${ico("menu", 10)}<span>메뉴(<u>M</u>)</span>${caret}</button>
      <span class="sep"></span>
      <span class="pick filter"><select aria-label="선택 필터"><option>선택 필터 없음</option></select>${caret}</span>
      <span class="pick scope"><select aria-label="선택 범위"><option>작업 파트 내만</option></select>${caret}</span>
      ${sets.map((s) => html`<span class="set">${s.map((t) => this.tool(t))}</span>`)}
      <span class="sep"></span>
      <span class="views">${views.map((t) => this.tool(t))}</span>
      <span class="sep"></span>
    `;
  }
}

/* ---------- resource bar ---------- */

@customElement("nx-resource-bar")
export class NxResourceBar extends LitElement {
  static styles = [shared, css`
    :host { display: flex; flex-direction: column; width: 20px; background: #dadada; }
    button { height: 26px; width: 20px; padding-left: 2px; }
    .gear { height: 16px; padding: 0; margin-bottom: 9px; }
    .active { background: #fff; }
    .apart { margin-top: 7px; }
  `];
  render() {
    const items: [string, string, string?][] = [
      ["asmNav", "어셈블리 탐색기"], ["conNav", "구속조건 탐색기"], ["partNav", "파트 탐색기", "active"], ["library", "재사용 라이브러리"],
      ["info", "HD3D 도구", "apart"], ["web", "웹 브라우저", "apart"], ["history", "히스토리", "apart"], ["palette", "시스템 재료"],
      ["process", "프로세스 스튜디오"], ["robot", "가공 마법사"], ["roles", "역할"],
    ];
    return html`
      <button class="gear" aria-label="설정">${ico("gear", 10)}</button>
      ${items.map(([i, l, c]) => html`<button class=${c ?? ""} aria-label=${l}>${big(i, "l16")}</button>`)}
    `;
  }
}

/* ---------- part navigator ---------- */

interface Node { text: string; icons: string[]; child?: boolean; dim?: boolean; strong?: boolean; expand?: "+" | "−"; }

const nodes: Node[] = [
  { text: "히스토리 모드", icons: ["clock"] },
  { text: "모델 뷰", icons: ["views"], expand: "+" },
  { text: "카메라", icons: ["tick", "camera"], expand: "+" },
  { text: "도면", icons: ["clock", "sheet"], expand: "+" },
  { text: "사용자 수식", icons: ["formula"] },
  { text: "모델 히스토리", icons: ["folder"], expand: "−" },
  { text: "데이텀 좌표계 (0)", icons: ["csys"], child: true, dim: true },
  { text: "스케치 (1) \"SKET...", icons: ["sketch"], child: true, dim: true },
  { text: "돌출 (2)", icons: ["extrude"], child: true },
  { text: "데이텀 평면 (3)", icons: ["plane"], child: true, dim: true },
  { text: "스케치 (4) \"SKET...", icons: ["sketch"], child: true, dim: true },
  { text: "스케치 (5) \"SKET...", icons: ["sketch"], child: true, dim: true },
  { text: "스위핑 (6)", icons: ["sweep"], child: true, dim: true },
  { text: "돌출 (7)", icons: ["extrude"], child: true },
  { text: "스케치 (8) \"SKET...", icons: ["sketch"], child: true, dim: true },
  { text: "돌출 (9)", icons: ["extrude"], child: true, dim: true },
  { text: "돌출 (10)", icons: ["extrude"], child: true },
  { text: "모서리 블렌드 (1...", icons: ["blend"], child: true },
  { text: "모서리 블렌드 (1...", icons: ["blend"], child: true },
  { text: "모서리 블렌드 (1...", icons: ["blend"], child: true },
  { text: "모서리 블렌드 (1...", icons: ["blend"], child: true },
  { text: "모서리 블렌드 (...", icons: ["blend"], child: true, strong: true },
];

@customElement("nx-part-navigator")
export class NxPartNavigator extends LitElement {
  static styles = [shared, css`
    :host { display: flex; flex-direction: column; width: 286px; padding: 0 6px 3px 3px; background: #fff; border-right: 1px solid #b4b4b4; font-size: 10px; line-height: 13px; color: #333; min-height: 0; }
    header { display: flex; align-items: center; justify-content: space-between; height: 19px; padding: 0 3px; }
    h2 { margin: 0; font-size: 10px; font-weight: 400; }
    .max { width: 9px; height: 9px; border: 1px solid #333; border-top-width: 2px; }
    .scroller { flex: 1; min-height: 0; overflow: hidden; border: 1px solid #e2e2e2; border-width: 0 1px; }
    table { width: 100%; table-layout: fixed; border-collapse: separate; border-spacing: 0; }
    .c1 { width: 123px; } .c2, .c3 { width: 61px; }
    th { height: 16px; padding: 0 0 0 4px; background: #ededed; border-right: 1px solid #dcdcdc; text-align: left; font-weight: 400; color: #444; }
    th:last-child { border-right: 0; }
    .sort { display: inline-block; border: 3px solid transparent; border-top: 0; border-bottom: 3px solid #333; margin: 0 0 2px 10px; }
    td { height: 15px; padding: 0; border-right: 1px solid #ededed; border-bottom: 1px solid #eee; white-space: nowrap; overflow: hidden; }
    tr:nth-child(3n) td { height: 14px; }
    tr:nth-child(even) td { background: #f9f9f9; }
    td + td { padding-left: 3px; }
    .node { display: flex; align-items: center; height: 13px; font-family: Lato, "Noto Sans CJK KR", sans-serif; }
    .twig { flex: none; width: 6px; height: 100%; margin-left: 6px; background: linear-gradient(#d2d2d2, #d2d2d2) left center / 6px 1px no-repeat, linear-gradient(#d2d2d2, #d2d2d2) left top / 1px 100% no-repeat; }
    .child .twig { margin-left: 17px; margin-right: 2px; }
    .box { flex: none; width: 7px; height: 7px; margin: 0 2px 0 3px; font: 9px/7px "Liberation Mono", monospace; color: #222; }
    .node svg { margin-right: 1px; }
    .dim { color: #a5a5a5; }
    .strong { font-weight: 700; }
    input { appearance: none; flex: none; width: 9px; height: 9px; margin: 0; border: 1px solid #333; background: #fff; }
    input:checked::before { content: ""; display: block; width: 7px; height: 7px; background: #0fae2c; clip-path: polygon(0 45%, 22% 30%, 42% 58%, 82% 0, 100% 15%, 45% 100%); }
    .splitter { height: 4px; background: #d2d2d2; }
    .fold { justify-content: space-between; height: 17px; border-bottom: 2px solid #d9d9d9; padding: 0 3px 0 4px; font-size: 12px; line-height: 15px; color: #4a9cc7; }
    .chev { width: 9px; height: 8px; }
  `];
  private row(n?: Node) {
    if (!n) return html`<tr><td></td><td></td><td></td><td></td></tr>`;
    return html`<tr>
      <td><div class=${classMap({ node: true, child: !!n.child })}>
        ${n.expand ? html`<button class="box" aria-label="${n.text} 펼치기">${n.expand}</button>` : html`<span class="twig"></span>`}
        ${n.child ? html`<input type="checkbox" checked aria-label=${n.text}>` : nothing}
        ${n.icons.map((i) => ico(i, 11))}
        <span class=${classMap({ dim: !!n.dim, strong: !!n.strong })}>${n.text}</span>
      </div></td>
      <td>${n.child ? ico("tick", 10) : nothing}</td><td></td><td></td>
    </tr>`;
  }
  render() {
    const blanks = Array.from({ length: 6 });
    return html`
      <header><h2>파트 탐색기</h2><button class="max" aria-label="최대화"></button></header>
      <div class="scroller">
        <table>
          <colgroup><col class="c1"><col class="c2"><col class="c3"><col></colgroup>
          <thead><tr><th>이름<span class="sort"></span></th><th>최신</th><th>코멘트</th><th></th></tr></thead>
          <tbody>${nodes.map((n) => this.row(n))}${blanks.map(() => this.row())}</tbody>
        </table>
      </div>
      <div class="splitter"></div>
      ${["종속성", "상세정보", "미리보기"].map((t) => html`
        <button class="fold" aria-expanded="false">${t}
          <svg class="chev" viewBox="0 0 9 8"><path d="M1 1l3.500 5L8 1" fill="none" stroke="#3a8fc0" stroke-width="2"/></svg>
        </button>`)}
    `;
  }
}

/* ---------- graphics window ---------- */

/* Soft shading along an edge: translucent strokes of growing width. */
const shadeAlong = (d: string, color: string, reach: number, alpha: number) =>
  Array.from({ length: reach }, (_, i) =>
    svg`<path d=${d} fill="none" stroke=${color} stroke-opacity=${alpha} stroke-width=${(i + 1) * 2}/>`);

const padFoot = "M420 356C412 361 412 370 423 376L533 420L660.7 468.700Q676 474 692.900 467.700L862.700 354.300Q870 348 867 343.500Q865 341 862 340";
const padBase = "M421 363Q423 368 428 370L556.700 420L664.500 462.700Q676 466 689.400 462L860.700 345.700";
const padFaceL = "M431 350Q460 352 490 364Q560 384 626.700 420Q646 431 664.500 441";
const padFaceR = "M689.400 438.300Q698 430 710 420Q756 378 793 353Q826 333 858 327";
const padTopL = "M431.700 344Q466 350 500 364.300Q572 384 638 420Q655 429 668 435.300";
const padTopR = "M686.300 434Q692 427 700 420Q724 398 750 377.700Q790 347 826.700 331.700Q842 325 856.700 321";
const bossFoot = "M526 284C519 287 518 297 528.300 303.300Q550 317 573 326.700Q595 337 616.700 344.300Q655 359 690.700 366.700Q703 370 718 366.700Q723 365 727.300 361.700L759 341.700Q770 334 766 326Q764 323 761 321";
const bossBase = "M526 291Q528 295 531.700 297.300Q550 310 573 320Q595 330 616.700 338.300Q655 352 692.700 359Q709 363 724.300 356L755.700 335Q761 331 761.500 326";
const bossEdge = "M526 272Q528 276 531.700 278.300Q552 291 573 300Q595 310 616.700 317.300Q655 332 693 340.700Q710 344 725.700 336L755.700 315.700Q760 313 762 309";
const bossTop = "M546 257.300Q558 266 573 273.300Q594 284 616.700 291.700Q655 307 698.300 316.700Q707 319 713.300 315.700L743.300 296Q748 292 744 287.700Q735 278 723 270Q709 261 693.300 253.300Q666 243 640 237Q620 230 600 228.300Q592 227 586.700 227.300Q582 227 578.300 229L545 251Q542 254 546 257.300Z";
const bossSil = "M526 293V273C526 261 534 251 545 250L573 231Q580 226 588 227L640 235Q700 249 746 287.300Q762 294 762 310V328";
const padSil = "M421 363L425 341Q426 336 433 330Q455 309 483 286Q505 268 540 250L573 231L590 227.300Q598 222 610 221.300Q620 221 640 227.700Q675 239 706.700 250Q735 260 760 271L823 300L852 313Q859 317 860.700 325L863 345";

@customElement("nx-viewport")
export class NxViewport extends LitElement {
  static styles = css`
    :host { display: block; min-width: 0; background: linear-gradient(#b5b6b8, #c2c3c5 18%, #dbdcde 58%, #e6e7e9 76%, #e7e8ea); }
    svg { display: block; width: 100%; height: 100%; }
    .edge { fill: none; stroke: #3f484b; stroke-width: .8; }
    .thin { fill: none; stroke: #4d575a; stroke-width: .6; }
    .axis { font: 9px "Liberation Sans", sans-serif; }
  `;
  render() {
    return html`<svg viewBox="306 120 660 494" preserveAspectRatio="xMidYMid meet" role="img" aria-label="3D 모델">
      <defs>
        <linearGradient id="top" gradientUnits="userSpaceOnUse" x1="500" y1="230" x2="680" y2="430"><stop offset="0" stop-color="#c2d9df"/><stop offset="1" stop-color="#cbe3e9"/></linearGradient>
        <linearGradient id="back" gradientUnits="userSpaceOnUse" x1="660" y1="235" x2="790" y2="330"><stop offset="0" stop-color="#b7ccd2"/><stop offset=".5" stop-color="#c3dae0"/><stop offset="1" stop-color="#c6dee4" stop-opacity="0"/></linearGradient>
        <linearGradient id="side" gradientUnits="userSpaceOnUse" x1="526" y1="0" x2="762" y2="0"><stop offset="0" stop-color="#8a979b"/><stop offset=".03" stop-color="#68757a"/><stop offset=".5" stop-color="#5f6b6e"/><stop offset=".7" stop-color="#566163"/><stop offset=".85" stop-color="#7a878b"/><stop offset="1" stop-color="#829094"/></linearGradient>
        <linearGradient id="corner" gradientUnits="userSpaceOnUse" x1="664" y1="0" x2="690" y2="0"><stop offset="0" stop-color="#667276"/><stop offset="1" stop-color="#829094"/></linearGradient>
        <linearGradient id="dusk" gradientUnits="userSpaceOnUse" x1="526" y1="0" x2="610" y2="0"><stop offset="0" stop-color="#6f7d82" stop-opacity=".5"/><stop offset="1" stop-color="#8a989d" stop-opacity="0"/></linearGradient>
        <radialGradient id="glint" gradientUnits="userSpaceOnUse" cx="709" cy="325" r="16"><stop offset="0" stop-color="#e2f4f8"/><stop offset="1" stop-color="#e2f4f8" stop-opacity="0"/></radialGradient>
        <linearGradient id="turn" gradientUnits="userSpaceOnUse" x1="746" y1="0" x2="763" y2="0"><stop offset="0" stop-color="#6f7d82" stop-opacity="0"/><stop offset="1" stop-color="#6f7d82" stop-opacity=".6"/></linearGradient>
        <clipPath id="roll"><path d="${bossSil}L761.500 310Q760 313 755.700 315.700L725.700 336Q710 344 693 340.700Q655 332 616.700 317.300Q573 301 531.700 278.300Q527 276 526 272Z"/></clipPath>
        <clipPath id="lipL"><path d="${padTopL}L664.500 441Q646 431 626.700 420Q560 384 490 364Q460 352 431 350Z"/></clipPath>
        <clipPath id="lipR"><path d="${padTopR}L858 327Q826 333 793 353Q756 378 710 420L689.400 438.300Z"/></clipPath>
        <clipPath id="padFootClip"><path d="${padFoot}L860.700 345.700Q775 404 689.400 462Q676 466 664.500 462.700L428 370Z"/></clipPath>
        <clipPath id="bossFootClip"><path d="${bossFoot}V300L526 280Z"/></clipPath>
      </defs>

      <path d="M350.300 371.500L688.700 503.300L687 555.300L348 424Z" fill="#636e72"/>
      <path d="M688.700 503.300L932.500 342L930.500 394L687 555.300Z" fill="#7a868a"/>
      <path d="M593.500 210L932.500 342L688.700 503.300L350.300 371.500Z" fill="#c7dde2"/>
      <path class="edge" d="M593.500 210L350.300 371.500L348 424L687 555.300L930.500 394L932.500 342L688.700 503.300L350.300 371.500M688.700 503.300L687 555.300M593.500 210L640 228M823 299.500L932.500 342"/>

      <path d="${padFoot}L856 325L676 440L425 345Z" fill="#cde2e7"/>
      <g clip-path="url(#padFootClip)">${shadeAlong(padBase, "#3f4a4d", 5, 0.2)}</g>
      <path d="${padSil}L689.400 462Q676 466 664.500 462.700L428 370Q423 368 421 363Z" fill="url(#top)"/>
      <path d="M640 227.700Q675 239 706.700 250Q735 260 760 271L823 300L852 313Q859 317 856 321L770 330L640 240L590 227Q598 222 610 221.300Q620 221 640 227.700Z" fill="url(#back)"/>
      <path d="M431 350Q460 352 490 364Q560 384 626.700 420Q646 431 664.500 441V462.700L428 370Z" fill="#677377"/>
      <path d="M689.400 438.300Q698 430 710 420Q756 378 793 353Q826 333 858 327L860.700 345.700L689.400 462Z" fill="#808e92"/>
      <path d="M664.500 441Q676 446 689.400 438.300V462Q676 466 664.500 462.700Z" fill="url(#corner)"/>
      <path d="M424 343L431.500 350L428 370Q423 368 421 363Z" fill="#83959a"/>
      <path d="M857 326L861 323L863 345L860.700 346Z" fill="#9fb0b5"/>
      <g clip-path="url(#lipL)"><path d=${padTopL} fill="none" stroke="#dceff3" stroke-width="8"/>${shadeAlong(padFaceL, "#3f4a4d", 3, 0.25)}</g>
      <g clip-path="url(#lipR)"><path d=${padTopR} fill="none" stroke="#dceff3" stroke-width="8"/>${shadeAlong(padFaceR, "#59666a", 3, 0.2)}</g>
      <path d="M668 435.300Q676 440 686.300 434L689.400 438.300Q676 447 664.500 441Z" fill="#cfe4e9"/>
      <path class="thin" d=${padFoot} />
      <path class="edge" d="${padBase}M431 350L428 370L423 376M664.500 441V462.700L660.700 468.700M689.400 438.300V462L692.900 467.700M857 327L860.700 345.700L863 354"/>
      <path class="edge" d=${padFaceL} /><path class="edge" d=${padFaceR} />
      <path class="thin" d="${padTopL}Q676 440 686.300 434M664.500 441Q676 446 689.400 438.300M668 435.300L664.500 441M686.300 434L689.400 438.300"/>
      <path class="thin" d="${padTopR}Q858 318 853 314"/>
      <path class="thin" d=${padSil} /><path class="thin" d="M431.700 344Q427 340 431 334Q452 318 473.300 300Q500 276 530 258.300M431.700 344L431 350M856.700 321L858 327L861 325"/>

      <path d="${bossFoot}V300L526 284Z" fill="#d3e7ec"/>
      <g clip-path="url(#bossFootClip)">${shadeAlong(bossBase, "#3f4a4d", 5, 0.2)}</g>
      <path d="${bossSil}Q761 331 755.700 335L724.300 356Q709 363 692.700 359Q655 352 616.700 338.300Q573 322 531.700 297.300Q527 295 526 291Z" fill="url(#side)"/>
      <g clip-path="url(#roll)">
        <path d="M520 220H770V350H520Z" fill="#cfe4ea"/>
        ${shadeAlong(bossEdge, "#4a5558", 11, 0.13)}
        <path d="M520 220H770V350H520Z" fill="url(#dusk)"/>
        <circle cx="709" cy="325" r="16" fill="url(#glint)"/>
        <path d="M740 280H764V320H740Z" fill="url(#turn)"/>
      </g>
      <path d=${bossTop} fill="#c7dee4"/>
      <path class="thin" d=${bossTop} /><path class="thin" d=${bossSil} />
      <path class="edge" d=${bossEdge} /><path class="edge" d=${bossBase} /><path class="thin" d=${bossFoot} />
      <path class="thin" d="M546 257.300Q533 264 531.700 278.300V297.300L528.300 303.300M699 317Q693 326 693 340.700L692.700 359L690.700 366.700M713.300 315.700Q725 321 725.700 336L724.300 356L727.300 361.700M744 296Q754 301 755.700 315.700V335L759 341.700M545 251Q536 249 530 258"/>

      <path d="M347 558.500L360 554L368.500 559V575L358 580L346 574Z" fill="#cdcfd0" stroke="#a5a7a8" stroke-width=".8"/>
      <path d="M347 558.500L358 563.500L368.500 559M358 563.500V580M360 554V570L368.500 575M360 570L346 574" fill="none" stroke="#b4b6b7" stroke-width=".7"/>
      <path d="M345 575L361 563" stroke="#8fb596" stroke-width="1.500"/>
      <text class="axis" x="359" y="566" fill="#a5c3a8">Y</text>
      <path d="M345.500 575L346 556" stroke="#1430b4" stroke-width="2"/><path d="M346 551L348.500 558H343.500Z" fill="#1430b4"/>
      <path d="M345 575L360 580" stroke="#c22a22" stroke-width="2"/><path d="M366 582L359 582.500L360.500 577.500Z" fill="#c22a22"/>
      <circle cx="345" cy="575" r="2.300" fill="#a8a8a8" stroke="#666" stroke-width=".5"/>
      <text class="axis" x="343" y="551" fill="#3c5be0">Z</text><text class="axis" x="367" y="587" fill="#d24a42">X</text>
    </svg>`;
  }
}

@customElement("app-root")
export class AppRoot extends LitElement {
  static styles = css`
    :host { display: flex; flex-direction: column; height: 100vh; background: #fff; font-family: "Noto Sans CJK KR", sans-serif; overflow: hidden; }
    main { display: grid; grid-template-columns: auto auto minmax(0, 1fr); flex: 1; min-height: 0; }
    nx-part-navigator, nx-viewport { height: 100%; min-height: 0; box-sizing: border-box; }
    nx-title-bar, nx-tabs, nx-ribbon, nx-selection-bar { flex: none; box-sizing: border-box; }
    .status { height: 11px; border-top: 1px solid #c4c4c4; box-sizing: border-box; }
  `;
  render() {
    return html`
      <nx-title-bar></nx-title-bar>
      <nx-tabs></nx-tabs>
      <nx-ribbon></nx-ribbon>
      <nx-selection-bar></nx-selection-bar>
      <main>
        <nx-resource-bar></nx-resource-bar>
        <nx-part-navigator></nx-part-navigator>
        <nx-viewport></nx-viewport>
      </main>
      <div class="status"></div>
    `;
  }
}
